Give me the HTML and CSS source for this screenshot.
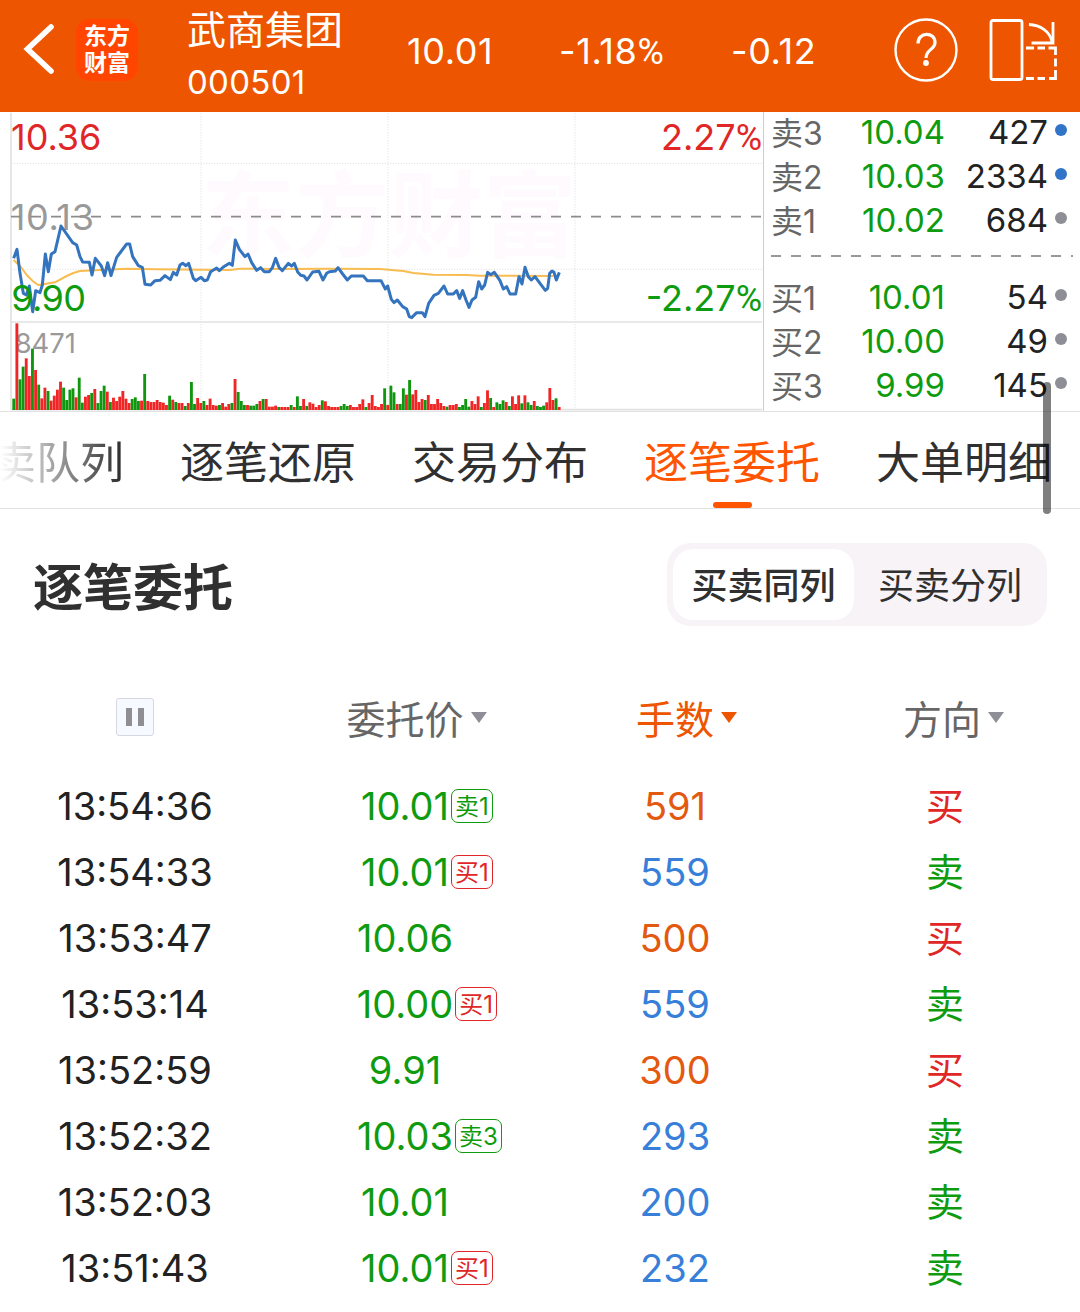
FILE: index.html
```html
<!DOCTYPE html>
<html lang="zh-CN">
<head>
  <meta charset="utf-8">
  <title>武商集团 000501</title>
  <link rel="stylesheet" href="styles.css">
</head>
<body>
  <header class="topbar">
    <svg class="back" width="34" height="54" viewBox="0 0 34 54">
      <path d="M29 5 L5.500 27 L29 49" fill="none" stroke="#fff" stroke-width="5.600" stroke-linecap="round"/>
    </svg>
    <div class="logo"><span>东方</span><span>财富</span></div>
    <div class="stock">
      <div class="stock-name">武商集团</div>
      <div class="stock-code">000501</div>
    </div>
    <div class="quote">
      <span class="q-price">10.01</span>
      <span class="q-rate">-1.18<span class="pct">%</span></span>
      <span class="q-diff">-0.12</span>
    </div>
    <svg class="help" width="64" height="64" viewBox="0 0 64 64" fill="none" stroke="#fff">
      <circle cx="32" cy="32" r="30.5" stroke-width="2.4"/>
      <path d="M24 25.500 C24 13.500 41 13.500 41 24.500 C41 31.500 32 31.500 32 40" stroke-width="3.200"/>
      <circle cx="32" cy="45" r="2.900" fill="#fff" stroke="none"/>
    </svg>
    <svg class="rotate" width="68" height="64" viewBox="0 0 68 64" fill="none" stroke="#fff" stroke-width="2.800">
      <rect x="2" y="2.500" width="31" height="59" rx="2"/>
      <path d="M40 6.500 C51 7 61 13 63 24"/>
      <path d="M64 4 V25 H42.500"/>
      <path d="M37 30 H45 M48.500 30 H56 M59.500 30 H66.500 V37 M66.500 40.500 V48.500 M66.500 52 V60.500 H60 M56 60.500 H48.500 M45 60.500 H37"/>
    </svg>
  </header>

  <section class="market">
    <div class="chart">
      <!-- drawn at 3 units per pixel -->
      <svg width="763" height="299" viewBox="0 6 2289 897">
        <text class="watermark" x="603" y="421">东方财富</text>
        <g class="grid">
          <path d="M34 160 H2286 M34 478 H2286 M603 10 V896 M1164 10 V896 M1725 10 V896"/>
        </g>
        <path class="frame" d="M33 8 V900 M30 636 H2286 M33 899 H2286"/>
        <text class="lbl red" x="33" y="120">10.36</text>
        <text class="lbl red end" x="2286" y="120">2.27<tspan class="pct">%</tspan></text>
        <text class="lbl gray" x="32" y="359">10.13</text>
        <text class="vol gray" x="44" y="728">8471</text>
        <path class="middle" d="M33 320 H2283"/>
        <path class="average" d="M41 450 L62 470 L80 495 L100 515 L115 525 L130 523 L165 517 L200 498 L220 489 L240 483 L300 480 L380 476 L470 478 L690 480 L720 476 L840 477 L990 476 L1140 477 L1210 483 L1240 489 L1300 494 L1400 495 L1440 497 L1540 497 L1660 498"/>
        <path class="price" d="M41 445 L51 418 L60 490 L70 550 L79 555 L88 528 L98 605 L107 542 L120 548 L127 525 L136 432 L145 485 L154 432 L165 425 L183 348 L218 398 L230 405 L240 440 L248 456 L268 457 L276 495 L286 445 L304 468 L314 497 L323 458 L333 497 L350 442 L380 402 L389 402 L398 440 L415 467 L427 472 L435 523 L452 525 L465 512 L480 511 L495 497 L511 509 L520 487 L530 495 L540 465 L548 460 L558 467 L566 460 L580 505 L587 512 L603 502 L613 512 L622 510 L632 485 L650 474 L658 482 L670 471 L688 460 L697 466 L706 390 L718 418 L735 440 L744 432 L755 458 L770 481 L782 473 L793 485 L808 485 L817 473 L827 445 L837 472 L847 482 L865 460 L875 468 L883 460 L893 486 L902 496 L912 498 L921 510 L938 486 L957 484 L969 510 L980 490 L988 485 L1006 483 L1014 473 L1028 492 L1042 510 L1054 498 L1090 498 L1102 512 L1143 512 L1156 537 L1163 528 L1174 568 L1182 578 L1192 570 L1208 590 L1220 597 L1228 620 L1235 623 L1250 608 L1267 608 L1275 620 L1286 580 L1302 556 L1315 550 L1332 528 L1343 552 L1360 552 L1370 542 L1379 565 L1388 542 L1398 570 L1407 592 L1416 570 L1427 562 L1436 515 L1445 537 L1454 525 L1463 487 L1472 494 L1483 487 L1500 512 L1510 537 L1520 530 L1530 552 L1547 552 L1557 500 L1566 522 L1575 472 L1585 500 L1594 510 L1605 500 L1620 520 L1636 541 L1643 535 L1649 490 L1656 483 L1662 487 L1669 510 L1678 487"/>
        <text class="lbl low green" x="34" y="603">9.90</text>
        <text class="lbl green end" x="2286" y="603">-2.27<tspan class="pct">%</tspan></text>
        <g id="bars"></g>
      </svg>
    </div>
    <div class="book">
      <div class="level"><span>卖3</span><b>10.04</b><i>427</i><em class="dot blue"></em></div>
      <div class="level"><span>卖2</span><b>10.03</b><i>2334</i><em class="dot blue"></em></div>
      <div class="level"><span>卖1</span><b>10.02</b><i>684</i><em class="dot"></em></div>
      <svg class="divider" width="302" height="2"><path d="M0 1 H302" stroke="#999" stroke-width="2" stroke-dasharray="10 10"/></svg>
      <div class="level"><span>买1</span><b>10.01</b><i>54</i><em class="dot"></em></div>
      <div class="level"><span>买2</span><b>10.00</b><i>49</i><em class="dot"></em></div>
      <div class="level"><span>买3</span><b>9.99</b><i>145</i><em class="dot"></em></div>
    </div>
  </section>

  <nav class="tabs">
    <a>卖队列</a>
    <a>逐笔还原</a>
    <a>交易分布</a>
    <a class="active">逐笔委托</a>
    <a>大单明细</a>
  </nav>
  <div class="scrollbar"></div>

  <section class="title-row">
    <h1>逐笔委托</h1>
    <div class="switch">
      <span class="on">买卖同列</span>
      <span>买卖分列</span>
    </div>
  </section>

  <section class="orders">
    <div class="row head">
      <div><span class="pause"></span></div>
      <div><span class="sort">委托价</span></div>
      <div><span class="sort active">手数</span></div>
      <div><span class="sort last">方向</span></div>
    </div>
    <div class="row"><div>13:54:36</div><div class="green"><span class="p">10.01<span class="tag">卖1</span></span></div><div class="orange">591</div><div class="red">买</div></div>
    <div class="row"><div>13:54:33</div><div class="green"><span class="p">10.01<span class="tag red">买1</span></span></div><div class="blue">559</div><div class="green">卖</div></div>
    <div class="row"><div>13:53:47</div><div class="green"><span class="p">10.06</span></div><div class="orange">500</div><div class="red">买</div></div>
    <div class="row"><div>13:53:14</div><div class="green"><span class="p">10.00<span class="tag red">买1</span></span></div><div class="blue">559</div><div class="green">卖</div></div>
    <div class="row"><div>13:52:59</div><div class="green"><span class="p">9.91</span></div><div class="orange">300</div><div class="red">买</div></div>
    <div class="row"><div>13:52:32</div><div class="green"><span class="p">10.03<span class="tag">卖3</span></span></div><div class="blue">293</div><div class="green">卖</div></div>
    <div class="row"><div>13:52:03</div><div class="green"><span class="p">10.01</span></div><div class="blue">200</div><div class="green">卖</div></div>
    <div class="row"><div>13:51:43</div><div class="green"><span class="p">10.01<span class="tag red">买1</span></span></div><div class="blue">232</div><div class="green">卖</div></div>
  </section>

  <script>
    // one entry per minute: r = up, g = down, number = height
    const volumes = "g34 r260 g92 g130 r155 r102 g184 r120 g76 r35 r67 g57 r28 r43 r61 r85 g67 g30 g61 g65 r38 g97 g22 r40 r45 g51 r63 g21 g57 g73 r55 g24 r37 r27 r40 r57 r34 r21 g33 g38 g27 r28 g108 r27 r24 r24 r30 r24 r22 r15 g43 r31 g24 r21 r21 g12 r21 g84 g18 r36 r21 g27 r15 r34 r15 r13 g15 r21 r10 r18 g21 r93 g54 g27 g15 r15 g13 g13 g18 r27 g33 r33 r10 r10 r13 g9 r9 r9 r9 g15 r9 g41 g12 r33 g12 r23 r19 r9 r15 g29 r26 r12 r9 r9 r9 g12 g18 g12 r15 r9 r9 r18 r32 g9 r21 r45 r12 r9 r18 g65 r15 g73 g53 r18 g18 g65 r46 g90 r47 r60 r24 r33 g30 r45 r18 r18 r33 r21 r12 g10 r15 r15 r18 g9 g15 g33 g10 r27 r18 r41 g9 r21 r59 g36 r9 g23 g18 g29 r24 g12 r41 r18 r44 g20 r44 g23 g15 r27 g12 g9 g13 r23 r66 r30 g35 r9".split(" ");
    const bars = document.getElementById("bars");
    volumes.forEach(function(v, i) {
      const h = Number(v.slice(1));
      const rect = document.createElementNS("http://www.w3.org/2000/svg", "rect");
      rect.setAttribute("x", (37 + i * 9.35).toFixed(2));
      rect.setAttribute("y", 900 - h);
      rect.setAttribute("width", 8.6);
      rect.setAttribute("height", h);
      rect.setAttribute("fill", v[0] === "r" ? "#f02626" : "#0f970f");
      bars.appendChild(rect);
    });
  </script>
</body>
</html>
```
FILE: styles.css
```css
* {
  box-sizing: border-box;
}

body {
  margin: 0;
  width: 1080px;
  height: 1312px;
  overflow: hidden;
  position: relative;
  background: #fff;
  color: #222;
  font-family: Inter, "Noto Sans CJK SC", sans-serif;
}

.red { color: #e02626; fill: #e02626; }
.green { color: #0f9b0f; fill: #0f9b0f; }
.gray { fill: #999; }
.orange { color: #e2590f; }
.blue { color: #387fd9; }

.pct {
  font-family: Roboto, sans-serif;
}

/* top bar */
.topbar {
  display: flex;
  align-items: flex-start;
  height: 112px;
  background: #ee5500;
  color: #fff;
}

.back {
  margin: 22px 0 0 22px;
}

.logo {
  display: flex;
  flex-direction: column;
  align-items: center;
  justify-content: center;
  width: 62px;
  height: 62px;
  margin: 19px 0 0 20px;
  border-radius: 14px;
  background: #ff4500;
  font-size: 23px;
  font-weight: 700;
  line-height: 27px;
}

.stock {
  width: 220px;
  margin-left: 49px;
}

.stock-name {
  margin-top: 5px;
  font-size: 39px;
  line-height: 50px;
}

.stock-code {
  font-size: 33px;
  line-height: 54px;
  letter-spacing: 0.3px;
}

.quote {
  display: flex;
  width: 488px;
  font-size: 36px;
  line-height: 102px;
  letter-spacing: 0.6px;
}

.q-price { width: 152px; }
.q-rate { width: 172px; }

.help {
  margin: 18px 0 0 -1px;
}

.rotate {
  margin: 18px 0 0 31px;
}

/* chart and order book */
.market {
  display: flex;
  height: 300px;
  border-bottom: 1px solid #e2e2e2;
}

.chart {
  width: 764px;
  border-right: 1px solid #ccc;
}

.chart svg {
  display: block;
}

.watermark {
  font-size: 282px;
  font-weight: 700;
  fill: #fefafe;
}

.grid path {
  stroke: #ddd;
  stroke-width: 3;
  stroke-dasharray: 3 5;
}

.frame {
  fill: none;
  stroke: #e2e2e2;
  stroke-width: 5;
}

.middle {
  stroke: #8c8c8c;
  stroke-width: 5;
  stroke-dasharray: 30 30;
}

.average,
.price {
  fill: none;
  stroke: #f8bc50;
  stroke-width: 6;
  stroke-linejoin: round;
}

.price {
  stroke: #3474be;
  stroke-width: 9;
}

.lbl { font-size: 108px; }
.lbl.gray { letter-spacing: 2px; }
.lbl.low { letter-spacing: -2px; }
.vol { font-size: 82px; }
.end { text-anchor: end; }

.book {
  flex: 1;
  padding: 0 0 0 7px;
}

.level {
  display: flex;
  align-items: center;
  height: 44px;
  font-size: 33px;
  line-height: 44px;
}

.level:first-child {
  margin-top: -2px;
}

.level span {
  width: 70px;
  font-size: 32px;
  color: #666;
  padding-top: 4px;
}

.level b {
  width: 104px;
  text-align: right;
  font-weight: 400;
  color: #0f9b0f;
}

.level i {
  width: 103px;
  text-align: right;
  font-style: normal;
}

.dot {
  width: 12px;
  height: 12px;
  margin: -4px 0 0 7px;
  border-radius: 50%;
  background: #8e8e96;
}

.dot.blue {
  background: #3275c8;
}

.divider {
  display: block;
  margin: 13px 0 18px;
}

/* tabs */
.tabs {
  display: flex;
  gap: 56px;
  height: 97px;
  padding-left: 180px;
  border-bottom: 1px solid #e2e2e2;
  font-size: 44px;
  line-height: 102px;
  color: #303030;
  white-space: nowrap;
}

.tabs a {
  flex: none;
  display: flex;
  flex-direction: column;
  align-items: center;
  height: 96px;
}

.tabs a:first-child {
  margin-left: -188px;
  background: linear-gradient(to right, #fff 8px, #bbb 48px, #303030 128px);
  -webkit-background-clip: text;
  background-clip: text;
  color: transparent;
}

.tabs .active {
  color: #ff5500;
}

.tabs .active::after {
  content: "";
  width: 39px;
  height: 6px;
  margin-top: -12px;
  border-radius: 3px;
  background: #ff5500;
}

.scrollbar {
  position: absolute;
  left: 1043px;
  top: 382px;
  width: 8px;
  height: 132px;
  border-radius: 4px;
  background: rgba(0, 0, 0, 0.5);
}

/* title */
.title-row {
  display: flex;
  justify-content: space-between;
  padding: 34px 33px 0;
  color: #303030;
}

h1 {
  margin: 7px 0 0;
  font-size: 50px;
  line-height: 76px;
  font-weight: 700;
}

.switch {
  display: flex;
  width: 380px;
  height: 83px;
  padding: 6px;
  border-radius: 24px;
  background: #f7f3f7;
  font-size: 36px;
  line-height: 75px;
}

.switch span {
  flex: none;
  width: 192px;
  text-align: center;
}

.switch .on {
  width: 181px;
  border-radius: 20px;
  background: #fff;
  font-weight: 500;
}

/* orders table */
.orders {
  padding-top: 58px;
}

.row {
  display: grid;
  grid-template-columns: repeat(4, 270px);
  height: 66px;
  line-height: 66px;
  font-size: 38px;
  text-align: center;
}

.head {
  height: 89px;
  font-size: 39px;
  line-height: 72px;
  color: #666;
}

.pause {
  display: block;
  width: 38px;
  height: 38px;
  margin: 14px auto 0;
  padding: 9px;
  border: 1px solid #d5d8e2;
  border-radius: 3px;
  background: #f6f9ff;
}

.pause::before {
  content: "";
  display: block;
  width: 6px;
  height: 18px;
  border: solid #8e8e93;
  border-width: 0 6px;
}

.sort,
.p {
  position: relative;
}

.sort::after {
  content: "";
  position: absolute;
  left: 100%;
  top: 50%;
  margin: -8px 0 0 7px;
  border: solid transparent;
  border-width: 11px 8.5px 0;
  border-top-color: #8e8e96;
}

.sort.active { color: #ee5500; }
.sort.active::after { border-top-color: #ee5500; }
.sort.last { margin-right: 6px; }

.tag {
  position: absolute;
  left: 100%;
  top: 50%;
  height: 34px;
  margin: -17px 0 0 2px;
  padding: 0 3px;
  border: 1px solid currentColor;
  border-radius: 7px;
  font-size: 24px;
  line-height: 33px;
  white-space: nowrap;
}
```
